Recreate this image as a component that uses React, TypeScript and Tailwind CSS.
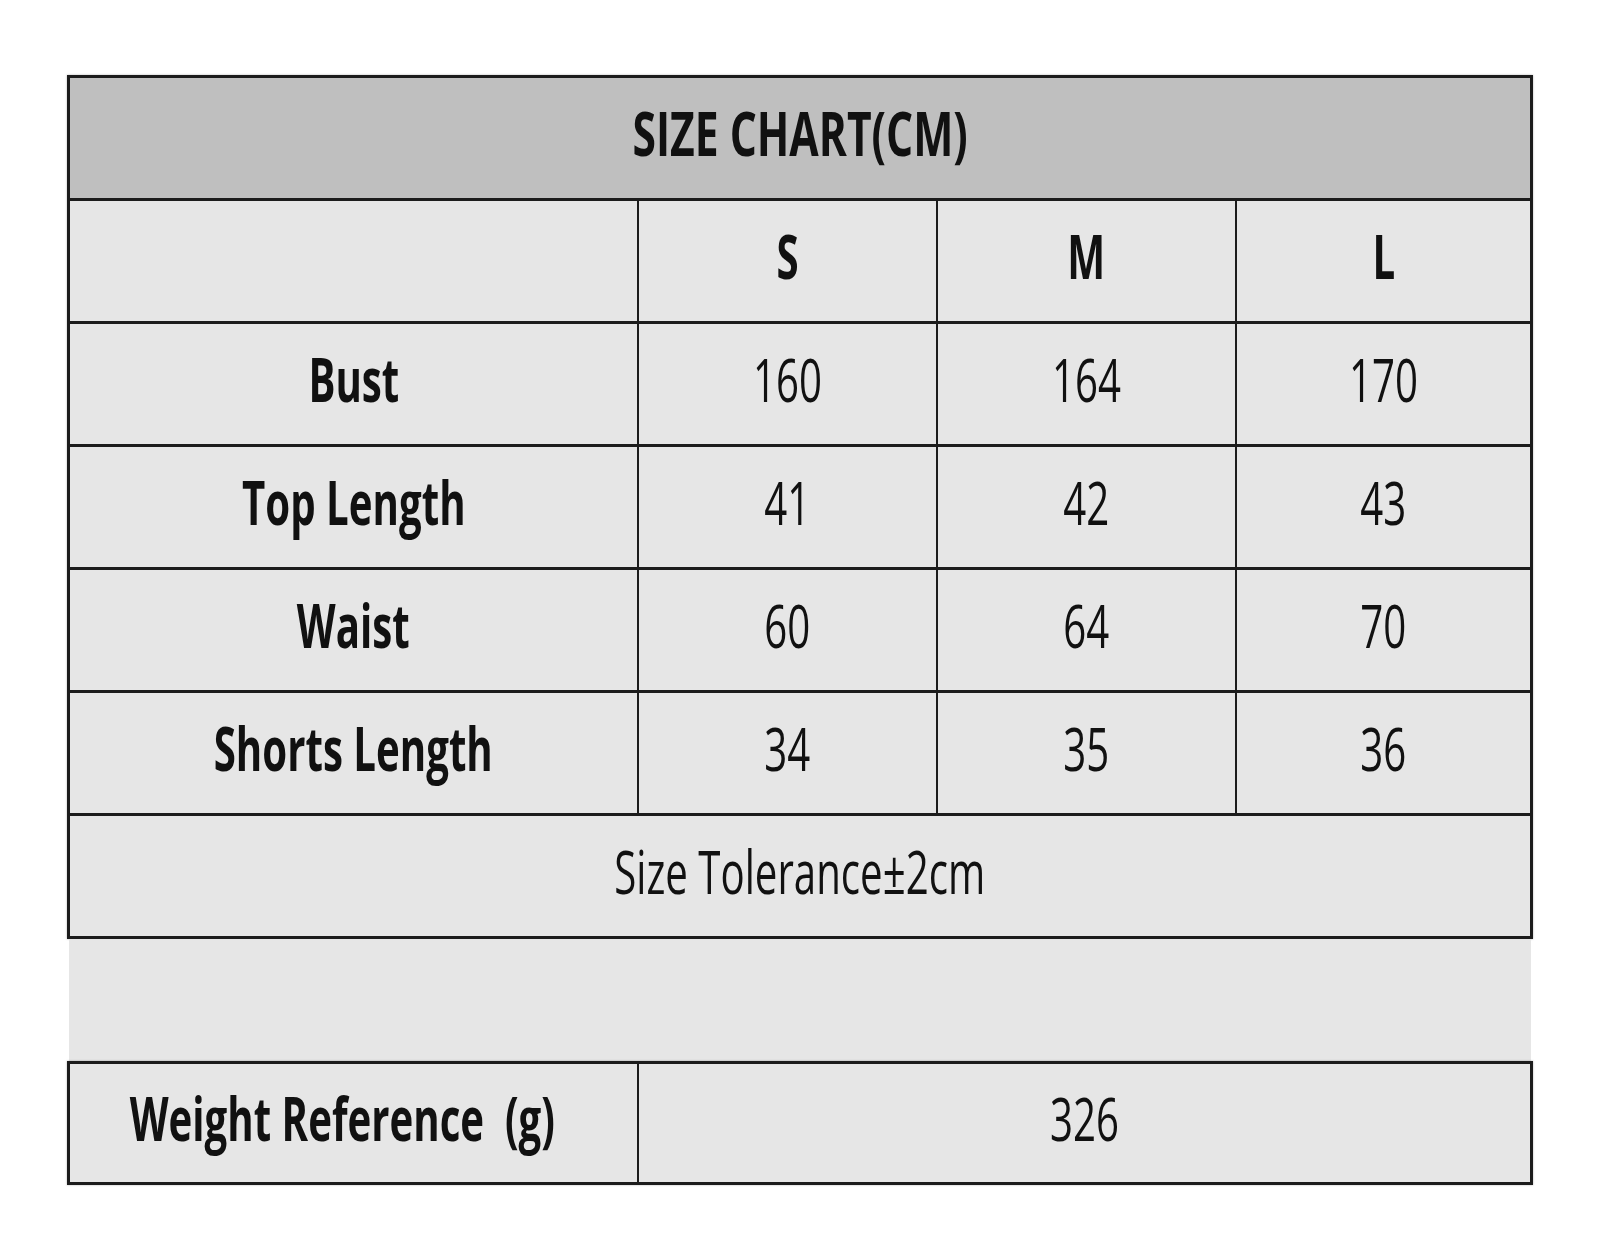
import React from "react";

const font = "font-['Open_Sans','Liberation_Sans',sans-serif]";

type Row = { label: string; s: string; m: string; l: string };

const rows: Row[] = [
  { label: "Bust", s: "160", m: "164", l: "170" },
  { label: "Top Length", s: "41", m: "42", l: "43" },
  { label: "Waist", s: "60", m: "64", l: "70" },
  { label: "Shorts Length", s: "34", m: "35", l: "36" },
];

// squeezed text, like the narrow lettering of the chart
function Txt({ children, bold, wide }: { children: React.ReactNode; bold?: boolean; wide?: boolean }) {
  return (
    <span
      className={`mb-[10px] inline-block origin-center whitespace-pre text-[60px] leading-none text-[#111] ${
        wide ? "scale-x-[0.71]" : "scale-x-[0.67]"
      } ${bold ? "font-bold" : "font-normal"}`}
    >
      {children}
    </span>
  );
}

function Cell({ children, first, className = "" }: { children?: React.ReactNode; first?: boolean; className?: string }) {
  return (
    <div
      className={`flex items-center justify-center bg-[#e6e6e6] ${
        first ? "" : "border-l-2 border-[#1c1c1c]"
      } ${className}`}
    >
      {children}
    </div>
  );
}

export default function App() {
  return (
    <div className={`min-h-[1260px] w-[1600px] bg-white pl-[67px] pt-[75px] ${font}`}>
      <div className="w-[1466px]">
        {/* main table */}
        <div className="border-[3px] border-[#1c1c1c] shadow-[0_0_2px_rgba(0,0,0,0.3)]">
          <div className="flex h-[120px] items-center justify-center bg-[#bfbfbf]">
            <Txt bold wide>
              SIZE CHART(CM)
            </Txt>
          </div>

          <div className="grid h-[123px] grid-cols-[567px_299px_299px_1fr] border-t-[3px] border-[#1c1c1c]">
            <Cell first />
            <Cell>
              <Txt bold>S</Txt>
            </Cell>
            <Cell>
              <Txt bold>M</Txt>
            </Cell>
            <Cell>
              <Txt bold>L</Txt>
            </Cell>
          </div>

          {rows.map((r) => (
            <div
              key={r.label}
              className="grid h-[123px] grid-cols-[567px_299px_299px_1fr] border-t-[3px] border-[#1c1c1c]"
            >
              <Cell first>
                <Txt bold>{r.label}</Txt>
              </Cell>
              <Cell>
                <Txt>{r.s}</Txt>
              </Cell>
              <Cell>
                <Txt>{r.m}</Txt>
              </Cell>
              <Cell>
                <Txt>{r.l}</Txt>
              </Cell>
            </div>
          ))}

          <div className="flex h-[123px] items-center justify-center border-t-[3px] border-[#1c1c1c] bg-[#e6e6e6]">
            <Txt>Size Tolerance±2cm</Txt>
          </div>
        </div>

        {/* spacer band */}
        <div className="mx-[2px] h-[122px] bg-[#e6e6e6]" />

        {/* weight table */}
        <div className="grid h-[124px] grid-cols-[567px_1fr] border-[3px] border-[#1c1c1c] shadow-[0_0_2px_rgba(0,0,0,0.3)]">
          <Cell first className="pr-[22px]">
            <Txt bold>{"Weight Reference  (g)"}</Txt>
          </Cell>
          <Cell>
            <Txt>326</Txt>
          </Cell>
        </div>
      </div>
    </div>
  );
}
